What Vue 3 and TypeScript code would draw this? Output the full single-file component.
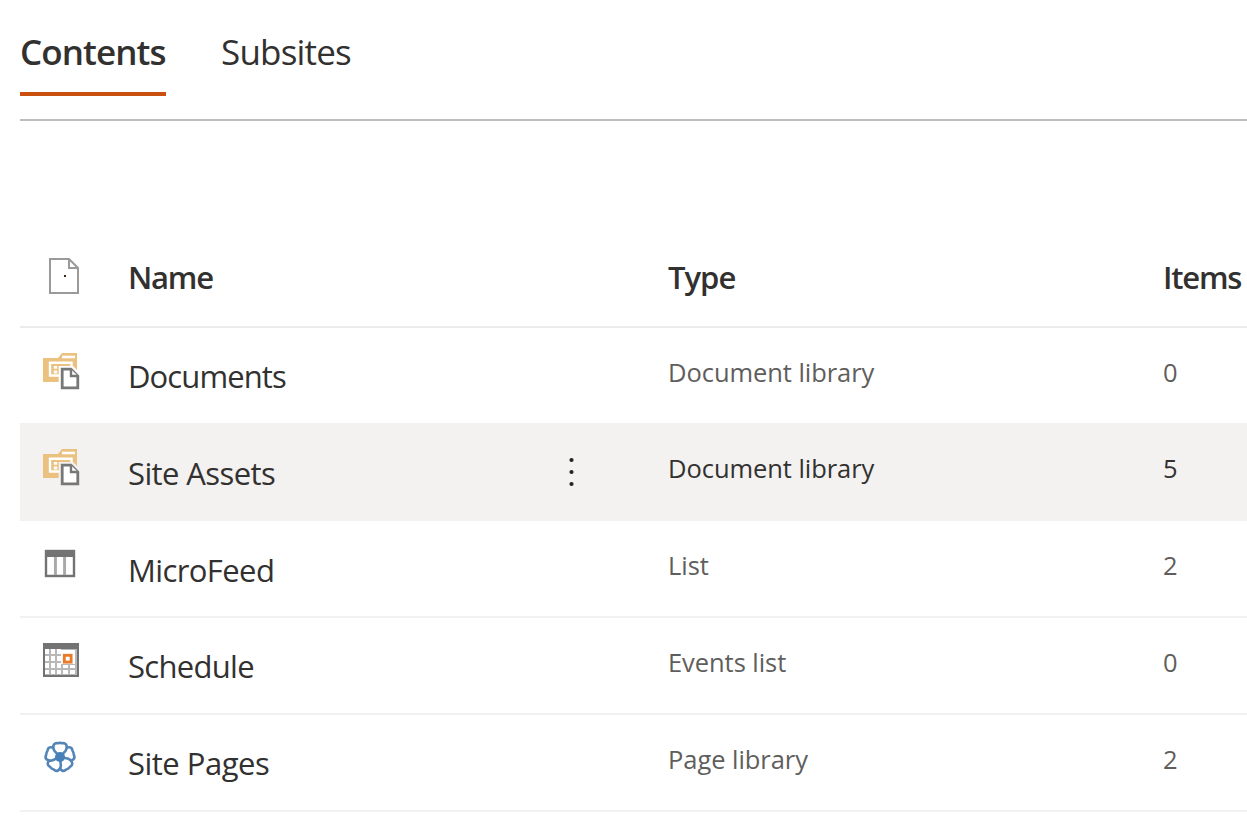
<script setup lang="ts">
type Kind = 'library' | 'list' | 'calendar' | 'pages'
interface Row {
  id: string
  name: string
  type: string
  items: number
  kind: Kind
  selected?: boolean
}

const rows: Row[] = [
  { id: 'documents', name: 'Documents', type: 'Document library', items: 0, kind: 'library' },
  { id: 'assets', name: 'Site Assets', type: 'Document library', items: 5, kind: 'library', selected: true },
  { id: 'feed', name: 'MicroFeed', type: 'List', items: 2, kind: 'list' },
  { id: 'schedule', name: 'Schedule', type: 'Events list', items: 0, kind: 'calendar' },
  { id: 'pages', name: 'Site Pages', type: 'Page library', items: 2, kind: 'pages' },
]
const petals = [72, 144, 216, 288, 0]
</script>

<template>
  <main class="page">
    <nav class="tabs">
      <a class="tab active"><span>Contents</span></a>
      <a class="tab"><span>Subsites</span></a>
    </nav>

    <section class="table">
      <div class="row head">
        <div class="icon">
          <svg width="40" height="40" viewBox="0 0 40 40" fill="none">
            <path d="M10 3H29L38 12V37H10Z" stroke="#9c9a98" stroke-width="2" />
            <path d="M29 3V12H38" stroke="#9c9a98" stroke-width="2" />
            <rect x="24" y="19" width="2" height="2" fill="#3a2412" />
          </svg>
        </div>
        <div class="name"><span>Name</span></div>
        <div class="type"><span>Type</span></div>
        <div class="items"><span>Items</span></div>
      </div>

      <div v-for="row in rows" :key="row.id" class="row" :class="[row.id, { selected: row.selected }]">
        <div class="icon soft">
          <svg v-if="row.kind === 'library'" width="40" height="40" viewBox="0 0 40 40">
            <path d="M3 6H18L22 1H37V30H3Z" fill="#ebc17f" />
            <path d="M22 5H35" stroke="#fff" stroke-width="2.600" />
            <path d="M20.500 23.500H10V10.800H31.500V14" fill="none" stroke="#fff" stroke-width="2.400" />
            <path d="M13.800 14H17.200V16.800H13.800ZM13.800 18.600H17.200V21.400H13.800ZM19 14H25V16.500H19Z" fill="#fff" />
            <path d="M18.700 14H33L41 22V39H18.700Z" class="halo" />
            <path d="M22.200 17.200H31L37.800 24V35.800H22.200Z" fill="#fff" stroke="#777" stroke-width="2.800" />
            <path d="M31 17.200V24H37.800" fill="#fff" stroke="#777" stroke-width="2.400" />
          </svg>
          <svg v-else-if="row.kind === 'list'" width="40" height="40" viewBox="0 0 40 40">
            <rect x="4.800" y="2.800" width="30.400" height="27.400" fill="#737373" />
            <path d="M7.200 10H14V27.800H7.200ZM16.500 10H23.500V27.800H16.500ZM26 10H32.800V27.800H26Z" fill="#fff" />
            <path d="M15.200 10V28M24.800 10V28" stroke="#a9a9a9" stroke-width="2.500" />
          </svg>
          <svg v-else-if="row.kind === 'calendar'" width="40" height="40" viewBox="0 0 40 40">
            <rect x="3" y="1" width="36" height="34" fill="#737373" />
            <rect x="5" y="7" width="32" height="26" fill="#b8b8b8" />
            <path
              d="M5 7H9V12H5ZM11 7H15V12H11ZM17 7H21V12H17ZM5 14H9V19H5ZM11 14H15V19H11ZM17 14H21V19H17ZM5 21H9V26H5ZM11 21H15V26H11ZM17 21H21V26H17ZM23 23H28V26H23ZM30 23H35V26H30ZM5 28H9V32H5ZM11 28H15V32H11ZM17 28H21V32H17ZM23 28H28V32H23ZM30 28H35V32H30Z"
              fill="#fff"
            />
            <rect x="21" y="8" width="14" height="14" fill="#fff" />
            <rect x="24.300" y="13.300" width="6.800" height="6.800" fill="#fff" stroke="#e77b2b" stroke-width="2.900" />
          </svg>
          <svg v-else width="40" height="40" viewBox="0 0 40 40">
            <g fill="#fff" stroke="#5485b8" stroke-width="2.600">
              <path
                v-for="angle in petals"
                :key="angle"
                d="M20 18L14.200 11.500C12 7 14 3.500 17.500 4.200Q20 3.500 22.500 4.200C26 3.500 28 7 25.800 11.500Z"
                :transform="`rotate(${angle} 20 18)`"
              />
            </g>
            <circle cx="20" cy="18" r="5" fill="#4780b9" />
          </svg>
        </div>
        <div class="name"><span>{{ row.name }}</span></div>
        <div class="more">
          <svg v-if="row.selected" width="10" height="32" viewBox="0 0 10 32" fill="#252423">
            <circle cx="5.500" cy="4" r="2.100" />
            <circle cx="5.500" cy="16" r="2.100" />
            <circle cx="5.500" cy="28" r="2.100" />
          </svg>
        </div>
        <div class="type"><span>{{ row.type }}</span></div>
        <div class="items"><span>{{ row.items }}</span></div>
      </div>
    </section>
  </main>
</template>

<style>
html,
body {
  background: #fff;
  overflow: hidden;
}
</style>

<style scoped>
.page {
  box-sizing: border-box;
  width: 1247px;
  height: 822px;
  padding-left: 20px;
  overflow: hidden;
  color: #323130;
  font-family: "Open Sans", "Noto Sans", sans-serif;
}
.tabs {
  display: flex;
  gap: 55px;
  box-sizing: border-box;
  height: 121px;
  border-bottom: 2px solid #bdbdbb;
}
.tab {
  box-sizing: border-box;
  height: 96px;
  padding-top: 27px;
  font-size: 35px;
  line-height: 50px;
  letter-spacing: -0.800px;
  white-space: nowrap;
}
.active {
  width: 146px;
  font-weight: 600;
  letter-spacing: -0.900px;
  border-bottom: 4px solid #ca5010;
}
.table {
  padding-top: 109px;
}
.row {
  display: grid;
  grid-template-columns: 108px 430px 110px 495px 84px;
  box-sizing: border-box;
  height: 97px;
  border-bottom: 2px solid #f2f1f0;
  white-space: nowrap;
}
.head {
  grid-template-columns: 108px 540px 495px 84px;
  height: 98px;
  font-weight: 600;
  border-bottom-color: #ebebea;
}
.icon {
  padding: 24px 0 0 20px;
}
.head .icon {
  padding-top: 26px;
}
.soft svg {
  filter: blur(0.550px);
}
svg {
  display: block;
}
.name {
  padding-top: 26px;
  font-size: 31px;
  line-height: 44px;
  letter-spacing: -0.600px;
}
.type,
.items {
  padding-top: 26px;
  font-size: 25.500px;
  line-height: 36px;
  letter-spacing: -0.060px;
  color: #605e5c;
}
.head .name,
.head .type,
.head .items {
  padding-top: 25px;
  font-size: 31px;
  line-height: 44px;
  letter-spacing: -1.200px;
  color: #323130;
}
.head .type {
  letter-spacing: -1px;
}
.documents {
  height: 95px;
  border-bottom: 0;
}
.documents .name {
  letter-spacing: -0.900px;
}
.selected {
  height: 98px;
  background: #f3f2f1;
  border-bottom-color: #f3f2f1;
}
.selected .name {
  padding-top: 28px;
}
.selected .type,
.selected .items {
  padding-top: 27px;
  color: #323130;
}
.selected .icon {
  padding-top: 25px;
}
.feed .name {
  padding-top: 27px;
}
.feed .icon {
  padding-top: 26px;
}
.schedule .name {
  letter-spacing: -0.700px;
}
.pages .name {
  letter-spacing: -0.500px;
}
.halo {
  fill: #fff;
}
.selected .halo {
  fill: #f3f2f1;
}
.more {
  padding: 33px 0 0 8px;
}
</style>
